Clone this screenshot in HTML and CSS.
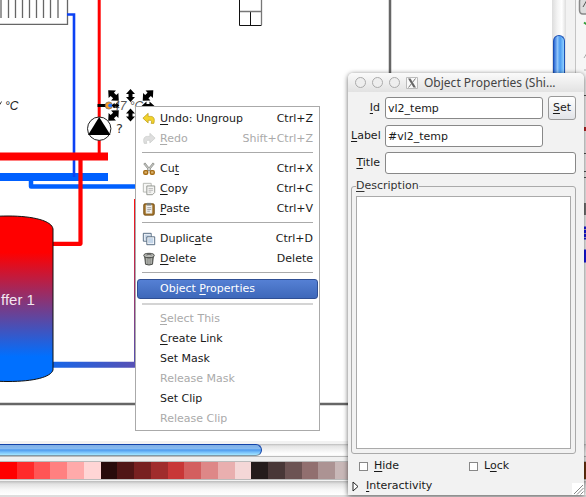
FILE: index.html
```html
<!DOCTYPE html>
<html lang="en">
<head>
<meta charset="utf-8">
<title>Object Properties</title>
<link rel="stylesheet" href="styles.css">
</head>
<body>
<main class="editor">
  <section class="canvas" aria-label="Drawing canvas">
    <svg class="drawing" width="552" height="441" role="img" aria-label="Heating system drawing">
      <defs>
        <linearGradient id="tank" x1="0" y1="0" x2="0" y2="1">
          <stop offset="0.22" stop-color="#f00"/>
          <stop offset="0.85" stop-color="#0070ff"/>
        </linearGradient>
        <linearGradient id="riser" gradientUnits="userSpaceOnUse" x1="0" y1="200" x2="0" y2="366">
          <stop offset="0" stop-color="#ff1010"/>
          <stop offset="1" stop-color="#5050b4"/>
        </linearGradient>
        <linearGradient id="outlet" gradientUnits="userSpaceOnUse" x1="53" y1="0" x2="136" y2="0">
          <stop offset="0" stop-color="#1666e8"/>
          <stop offset="1" stop-color="#5850b4"/>
        </linearGradient>
        <path id="arrow" d="M0-6.500 4.500-1.500H2V1.500H4.500L0 6.500-4.500 1.500H-2V-1.500H-4.500Z"/>
      </defs>
      <path d="M390 0V404H0" fill="none" stroke="#666" stroke-width="2.500"/>
      <g fill="none" stroke="#666" stroke-width="1.300">
        <path d="M67.500 0V24.300H0"/>
        <path d="M1 0V18M8.500 0V18M15.500 0V18M22.500 0V18M29.500 0V18M36.500 0V18M43.500 0V18M50.500 0V18M58 0V18"/>
      </g>
      <path d="M239.500 0V25.500H261.500M250.500 11V25" fill="none" stroke="#111"/>
      <path d="M261.500 25V0M240 11.500H261" fill="none" stroke="#777" stroke-width="1.300"/>
      <path d="M0 177H108" stroke="#0060ff" stroke-width="8"/>
      <path d="M67 14.500H74V177" fill="none" stroke="#0c42f4" stroke-width="2.600"/>
      <path d="M31 180V186.500H136" fill="none" stroke="#0060ff" stroke-width="4.500" stroke-linejoin="round"/>
      <path d="M99.200 0V153" stroke="#f00" stroke-width="3"/>
      <path d="M0 156.500H108" stroke="#f00" stroke-width="8"/>
      <path d="M80.500 158V243.800H53" fill="none" stroke="#f00" stroke-width="4.200" stroke-linejoin="round"/>
      <path d="M135.500 199V363" stroke="url(#riser)" stroke-width="3"/>
      <path d="M53 364.800H136" stroke="url(#outlet)" stroke-width="6"/>
      <path d="M-38 229C-36 220-18 216 8 216S52 221 53 229V370C51 377 34 381.500 8 381.500S-38 377-38 370Z" fill="url(#tank)" stroke="#111"/>
      <text class="tank-label" x="1" y="304.500">ffer 1</text>
      <circle cx="99.200" cy="128.700" r="11.700" fill="#fff" stroke="#222"/>
      <path d="M99.200 117 110.500 135H88Z"/>
      <text class="pump-label" x="116" y="133">?</text>
      <text class="reading" x="5" y="110">°C</text>
      <path d="M0 104.500 1.500 101.500" stroke="#444"/>
      <text class="reading selected" x="113" y="110">47 °C</text>
      <path d="M97.500 105.500H107" stroke="#000" stroke-width="3"/>
      <circle cx="108.800" cy="105.500" r="3.600" fill="#f79a25" stroke="#765" stroke-width="0.700"/>
      <circle cx="110.300" cy="105.500" r="2.100" fill="#2779ff"/>
      <use href="#arrow" transform="translate(113.500 95.500) rotate(-45) scale(1.150)"/>
      <use href="#arrow" transform="translate(130.500 95.500)"/>
      <use href="#arrow" transform="translate(148 95.500) rotate(45) scale(1.150)"/>
      <use href="#arrow" transform="translate(115.500 105.500) rotate(90) scale(.6)"/>
      <use href="#arrow" transform="translate(148 106) rotate(90)"/>
      <use href="#arrow" transform="translate(113.500 115.500) rotate(45) scale(1.150)"/>
      <use href="#arrow" transform="translate(130.500 115)"/>
    </svg>
  </section>
  <div class="scroll-v"><div class="thumb-v"></div></div>
  <aside class="dock">
    <svg width="11" height="441" aria-hidden="true">
      <path d="M12-2H6Q3.500-2 3.500 2V10Q3.500 14 7 14H12" fill="#ddd" stroke="#888" stroke-width="1.500"/>
      <path d="M11 0 7 7" stroke="#555"/>
      <path d="M8 22.500 11 24.500" stroke="#2f9a35" stroke-width="2"/>
      <path d="M8 58 11 53M8 70H11" stroke="#aaa"/>
      <path d="M8 95.500H11M8 153.500H11M8 171.500H11M8 177.500H11" stroke="#555"/>
      <path d="M8 129H11" stroke="#b22" stroke-width="4"/>
      <path d="M8 209H11" stroke="#777" stroke-width="12"/>
      <path d="M8 233H11M8 256H11" stroke="#1616e8" stroke-width="13"/>
      <path d="M8 229.500H11M8 233.500H11M8 237.500H11" stroke="#aac"/>
    </svg>
  </aside>
  <div class="scroll-h"><div class="thumb-h"></div></div>
  <div class="palette" aria-label="Colour palette">
    <i style="background:#f00"></i><i style="background:#ff2a2a"></i><i style="background:#f55"></i><i style="background:#ff8080"></i><i style="background:#faa"></i><i style="background:#ffd5d5"></i><i style="background:#280b0b"></i><i style="background:#501616"></i><i style="background:#782121"></i><i style="background:#a02c2c"></i><i style="background:#c83737"></i><i style="background:#d35f5f"></i><i style="background:#de8787"></i><i style="background:#e9afaf"></i><i style="background:#f4d7d7"></i><i style="background:#241c1c"></i><i style="background:#483737"></i><i style="background:#6c5353"></i><i style="background:#916f6f"></i><i style="background:#ac9393"></i><i style="background:#c8b7b7"></i><i style="background:#e3dbdb"></i><i style="background:#2b1100"></i><i style="background:#520"></i><i style="background:#803300"></i><i style="background:#a40"></i><i style="background:#d45500"></i><i style="background:#f60"></i><i style="background:#ff7f2a"></i><i style="background:#f95"></i><i style="background:#ffb380"></i><i style="background:#fca"></i><i style="background:#ffe6d5"></i><i style="background:#28170b"></i><i style="background:#6b3410"></i>
  </div>
  <div class="status"></div>
</main>

<div class="menu" role="menu">
  <button class="item" role="menuitem">
    <svg class="icon" viewBox="0 0 16 16"><path d="M1 7 7 1.500V5H10C13.500 5 15 8 13.500 13H10.500C11.500 10 11 9.500 9 9.500H7V12.500Z" fill="#f2d32c" stroke="#b99a12" stroke-width=".8"/></svg>
    <span><u>U</u>ndo: Ungroup</span><kbd>Ctrl+Z</kbd></button>
  <button class="item" role="menuitem" disabled>
    <svg class="icon" viewBox="0 0 16 16"><path d="M15 7 9 1.500V5H6C2.500 5 1 8 2.500 13H5.500C4.500 10 5 9.500 7 9.500H9V12.500Z" fill="#dedede" stroke="#c8ccc8" stroke-width=".8"/></svg>
    <span><u>R</u>edo</span><kbd>Shift+Ctrl+Z</kbd></button>
  <hr>
  <button class="item" role="menuitem">
    <svg class="icon" viewBox="0 0 16 16"><path d="M2.500 1.500 10.500 11M13.500 1.500 5.500 11" stroke="#8b8d88" stroke-width="2.600"/><path d="M2.800 2 9.500 9.500M13.200 2 6.500 9.500" stroke="#e4e5e1" stroke-width="1"/><g fill="#d9b06a" stroke="#a56b13" stroke-width="1.600"><rect x="2" y="9.800" width="4.500" height="4.200" rx="1.500"/><rect x="9.500" y="9.800" width="4.500" height="4.200" rx="1.500"/></g></svg>
    <span>Cu<u>t</u></span><kbd>Ctrl+X</kbd></button>
  <button class="item" role="menuitem">
    <svg class="icon" viewBox="0 0 16 16"><path d="M1.500 1.500H10.500V11.500H1.500Z" fill="#f7f7f5" stroke="#b0b2ad"/><path d="M5.500 4.500H14.500V12L12 14.500H5.500Z" fill="#f4f4f2" stroke="#8c8f89"/><path d="M7.500 7.500H12.500M7.500 9.500H12.500M7.500 11.500H10.500" stroke="#b5b5b5"/></svg>
    <span><u>C</u>opy</span><kbd>Ctrl+C</kbd></button>
  <button class="item" role="menuitem">
    <svg class="icon" viewBox="0 0 16 16"><rect x="2" y="2" width="12" height="13" rx="1.500" fill="#a5752a" stroke="#714b13"/><path d="M4.500 3.500H11.500V13H4.500Z" fill="#f4f4f2" stroke="#d0c8b8" stroke-width=".6"/><path d="M5.500 1H10.500V4H5.500Z" fill="#7d807b"/><path d="M6 6.500H10.500M6 8.500H10.500M6 10.500H9" stroke="#999"/></svg>
    <span><u>P</u>aste</span><kbd>Ctrl+V</kbd></button>
  <hr>
  <button class="item" role="menuitem">
    <svg class="icon" viewBox="0 0 16 16"><path d="M1.500 1.500H10.500V10.500H1.500Z" fill="#f5f8fb" stroke="#455c76"/><path d="M3 3H9V9H3Z" fill="#c8d7e6"/><path d="M5.500 5.500H14.500V14.500H5.500Z" fill="#fff" stroke="#455c76"/><path d="M7 7H13V13H7Z" fill="#c3d5e8"/></svg>
    <span>Duplic<u>a</u>te</span><kbd>Ctrl+D</kbd></button>
  <button class="item" role="menuitem">
    <svg class="icon" viewBox="0 0 16 16"><path d="M3 5H13L12 14Q8 15.800 4 14Z" fill="#858783" stroke="#3d3f3c"/><path d="M5.500 7V13.500M8 7.500V14M10.500 7V13.500" stroke="#c7c9c4"/><ellipse cx="8" cy="4" rx="6" ry="2.500" fill="#b9bbb6" stroke="#3d3f3c"/><path d="M5 3.500Q8 1.500 11 3.500" fill="none" stroke="#555"/></svg>
    <span><u>D</u>elete</span><kbd>Delete</kbd></button>
  <hr>
  <button class="item active" role="menuitem"><span>Object <u>P</u>roperties</span></button>
  <hr class="soft">
  <button class="item" role="menuitem" disabled><span><u>S</u>elect This</span></button>
  <button class="item" role="menuitem"><span><u>C</u>reate Link</span></button>
  <button class="item" role="menuitem"><span>Set Mask</span></button>
  <button class="item" role="menuitem" disabled><span>Release Mask</span></button>
  <button class="item" role="menuitem"><span>Set Clip</span></button>
  <button class="item" role="menuitem" disabled><span>Release Clip</span></button>
</div>

<form class="dialog">
  <header class="titlebar">
    <i class="light"></i><i class="light"></i><i class="light"></i>
    <svg class="x11" viewBox="0 0 12 12" aria-hidden="true"><path d="M.5.500H11.500V11.500H.5Z" fill="#f8f8f8" stroke="#bbb"/><path d="M2 1.500H4.500L10 10.500H7.500Z" fill="#666"/><path d="M9.500 1.500 2.500 10.500" stroke="#777"/></svg>
    <h1>Object Properties (Shi...</h1>
  </header>
  <div class="fields">
    <label for="oid"><u>I</u>d</label>
    <input id="oid" type="text" value="vl2_temp">
    <button class="set" type="button"><u>S</u>et</button>
    <label for="olabel"><u>L</u>abel</label>
    <input id="olabel" type="text" value="#vl2_temp">
    <label class="row-start" for="otitle"><u>T</u>itle</label>
    <input class="wide" id="otitle" type="text">
  </div>
  <fieldset>
    <legend><label for="desc"><u>D</u>escription</label></legend>
    <textarea id="desc"></textarea>
  </fieldset>
  <div class="checks">
    <label><input type="checkbox"><span><u>H</u>ide</span></label>
    <label><input type="checkbox"><span>L<u>o</u>ck</span></label>
  </div>
  <details>
    <summary><svg width="7" height="11" viewBox="0 0 7 11" aria-hidden="true"><path d="M1 1 6 5.500 1 10Z" fill="#fff" stroke="#222"/></svg><span><u>I</u>nteractivity</span></summary>
  </details>
  <svg class="grip" width="12" height="12" viewBox="0 0 12 12" aria-hidden="true"><path d="M0 0H12V12H0Z" fill="#fff"/><path d="M2 11 11 2M5 11.500 11.500 5M8.500 11.500 11.500 8.500" stroke="#888"/></svg>
</form>
</body>
</html>
```
FILE: styles.css
```css
* {
  box-sizing: border-box;
}

body {
  margin: 0;
  font: 11px/20px "DejaVu Sans", sans-serif;
  color: #1a1a1a;
  background: #f2f2f2;
  overflow: hidden;
}

button, input, textarea {
  font: inherit;
  color: inherit;
}

u {
  text-underline-offset: 2px;
  text-decoration-skip-ink: none;
}

/* Editor */
.editor {
  display: grid;
  grid-template: minmax(0, 1fr) 20px 20px 16px / minmax(0, 1fr) 14px 20px;
  height: 100vh;
}

.canvas {
  background: #fff;
  overflow: hidden;
}

.drawing {
  display: block;
}

.tank-label {
  font: 15px "Liberation Sans", sans-serif;
  fill: #f4e6f0;
}

.pump-label {
  font: 13px "DejaVu Sans", sans-serif;
  fill: #333;
}

.reading {
  font: italic 12px "Liberation Sans", sans-serif;
  fill: #222;
}

.reading.selected {
  fill: #555;
}

.scroll-v {
  padding: 35px 1px 0;
  background: linear-gradient(90deg, #ddd, #f4f4f4 40%, #fff 70%, #ddd);
}

.thumb-v {
  height: 100%;
  border: 1px solid #1c50b4;
  border-bottom: 0;
  border-radius: 6px 6px 0 0;
  background: linear-gradient(90deg, #2a68d4, #8fc4fa 35%, #4a9bf2 60%, #90d0ff);
}

.dock {
  display: flex;
  justify-content: flex-end;
  overflow: hidden;
}

.dock svg {
  border-left: 1px solid #c4c4c4;
  background: #f6f6f6;
}

.scroll-h, .palette, .status {
  grid-column: 1 / -1;
}

.scroll-h {
  padding: 3px 0 4px;
  background: linear-gradient(#f2f2f2 3px, #bbb 3px, #e4e4e4 5px, #fff 13px, #f4f4f4 15px, #bbb 15px, #bbb 16px, #f0f0f0 16px);
}

.thumb-h {
  width: 262px;
  height: 12px;
  border: solid #1243a8;
  border-width: 1px 1px 1px 0;
  border-bottom-color: #8099a8;
  border-radius: 0 6px 6px 0;
  background: linear-gradient(#7faee4, #86baf0 35%, #4f9bee 50%, #7cc4fb 75%, #a4e6ff);
}

.palette {
  display: flex;
  border: solid #bbb;
  border-width: 1px 0;
  margin-bottom: 1px;
}

.palette i {
  flex: 1;
}

.status {
  border-bottom: 2px solid #ddd;
  background: linear-gradient(#bbb, #e2e2e2 3px, #f8f8f8 9px, #fff);
}

/* Context menu */
.menu {
  position: absolute;
  left: 135px;
  top: 106px;
  width: 185px;
  padding: 2px 1px 1px;
  border: 1px solid #aaa;
  background: #fff;
}

.item {
  display: flex;
  width: 100%;
  height: 20px;
  padding: 0 4px 0 22px;
  border: 1px solid transparent;
  border-radius: 3px;
  background: none;
  line-height: 18px;
  text-align: left;
  white-space: nowrap;
}

.item:disabled {
  color: #aaa;
}

.item.active {
  border-color: #2f4f94;
  color: #fff;
  background: linear-gradient(#5580d4, #3e68ba);
}

.item kbd {
  margin-left: auto;
  font: inherit;
}

.icon {
  width: 14px;
  height: 14px;
  margin: 2px 4px 0 -18px;
}

.menu hr {
  height: 10px;
  margin: 0 5px;
  border: 0;
  background: linear-gradient(#aaa, #aaa) 0 3px / 100% 1px no-repeat;
}

.menu hr.soft {
  background: linear-gradient(#d4d4d4, #d4d4d4) 0 4px / 100% 2px no-repeat;
}

/* Object properties dialog */
.dialog {
  position: absolute;
  left: 348px;
  top: 73px;
  right: 2px;
  bottom: 2px;
  display: flex;
  flex-direction: column;
  border-radius: 5px 5px 0 0;
  background: #f2f2f2;
  box-shadow: 0 1px 5px #0009;
}

.titlebar {
  display: flex;
  align-items: center;
  gap: 6px;
  height: 19px;
  padding-left: 7px;
  border-radius: 5px 5px 0 0;
  background: linear-gradient(#fafafa, #e2e2e2);
}

.light {
  width: 11px;
  height: 11px;
  border: 1px solid #aaa;
  border-radius: 50%;
  background: #eee;
}

.x11 {
  width: 12px;
  height: 12px;
}

.titlebar h1 {
  margin: 0;
  font: 12px/19px "Noto Sans", sans-serif;
  color: #444;
  white-space: nowrap;
}

.fields {
  display: grid;
  grid-template-columns: 29px minmax(0, 1fr) 28px;
  gap: 5px;
  align-items: center;
  padding: 4px 8px 0 3px;
}

.fields label {
  text-align: right;
}

.fields input {
  width: 100%;
  height: 22px;
  padding: 0 2px;
  border: 1px solid #888;
  border-radius: 3px;
  background: #fff;
}

.row-start {
  grid-column: 1;
}

.fields .wide {
  grid-column: 2 / -1;
}

.set {
  height: 24px;
  padding: 0;
  border: 1px solid #999;
  border-radius: 3px;
  background: linear-gradient(#fff, #e2e4e8);
}

fieldset {
  flex: 1;
  display: flex;
  min-height: 0;
  margin: 2px 8px 0 3px;
  padding: 0 4px 4px;
  border: 1px solid #aaa;
  border-radius: 3px;
}

legend {
  height: 20px;
  padding: 0;
  color: #333;
}

textarea {
  flex: 1;
  resize: none;
  border: 1px solid #aaa;
  background: #fff;
}

.checks {
  display: grid;
  grid-template-columns: 110px 1fr;
  padding: 2px 0 1px 11px;
}

.checks label {
  display: flex;
  align-items: center;
  gap: 6px;
}

.checks input {
  appearance: none;
  width: 9px;
  height: 9px;
  margin: 0;
  border: 1px solid #888;
  background: #fff;
}

summary {
  display: flex;
  align-items: center;
  gap: 7px;
  height: 18px;
  padding-left: 4px;
  list-style: none;
}

.grip {
  position: absolute;
  right: 0;
  bottom: 0;
}
```
